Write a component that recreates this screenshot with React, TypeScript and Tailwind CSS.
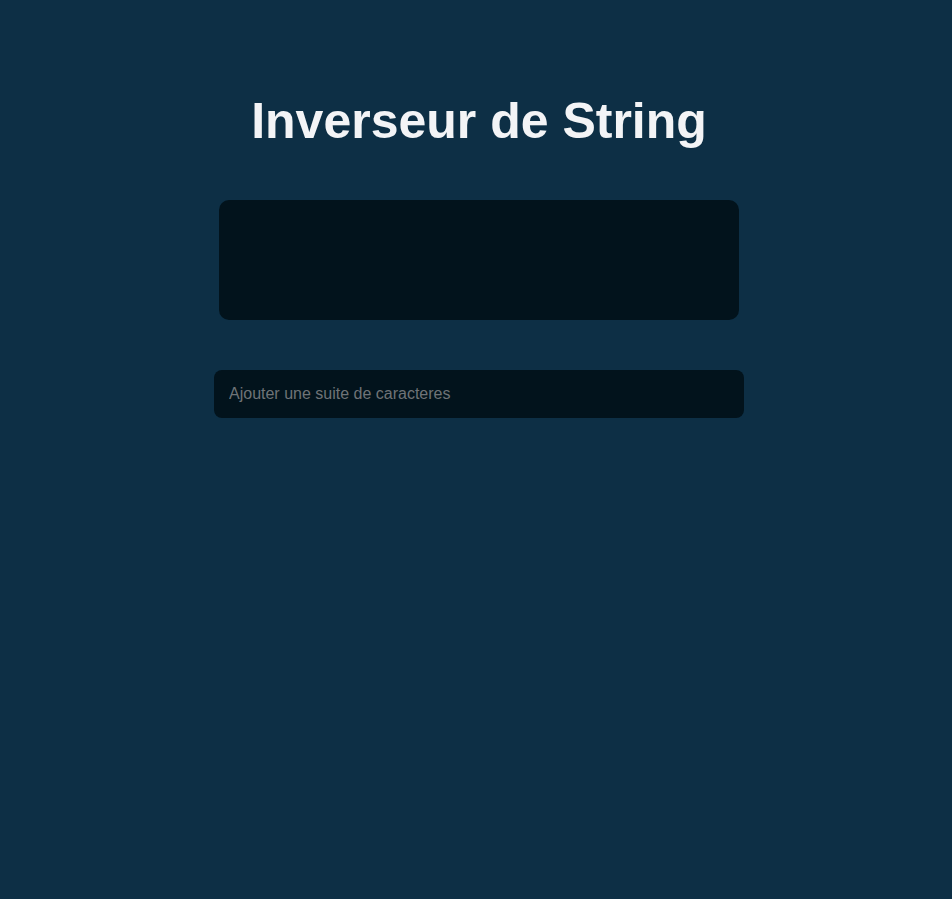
export default function App() {
  return (
    <div className="min-h-[899px] bg-[#0d2f45] font-['Liberation_Sans',Arial,sans-serif] flex flex-col items-center pl-[6px]">
      <h1 className="mt-[89px] text-[50px] leading-[64px] font-bold text-[#f3f4f6]">Inverseur de String</h1>
      <div className="mt-[47px] w-[520px] h-[120px] rounded-[10px] bg-[#02131c]" />
      <input
        type="text"
        placeholder="Ajouter une suite de caracteres"
        className="mt-[50px] w-[530px] h-[48px] rounded-[8px] bg-[#02131c] px-[15px] text-[16px] text-[#d1d5db] placeholder:text-[#6f7377] outline-none"
      />
    </div>
  );
}
